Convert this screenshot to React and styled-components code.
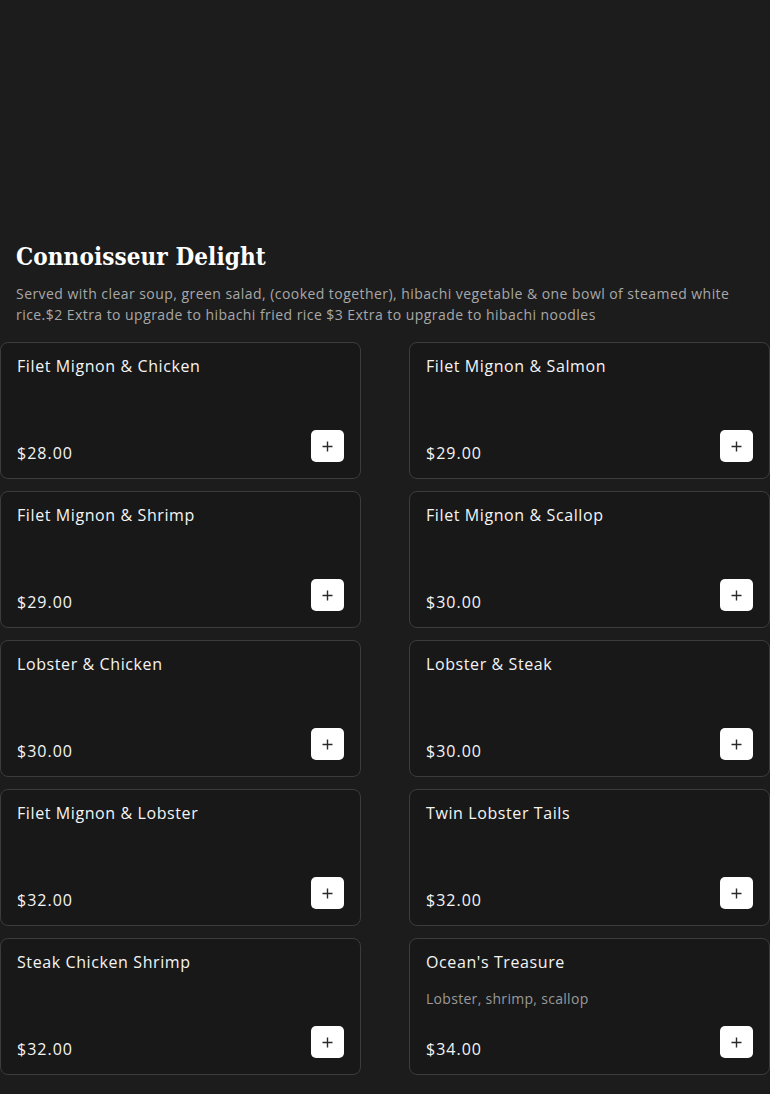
import React from "react";
import styled, { createGlobalStyle } from "styled-components";

const GlobalStyle = createGlobalStyle`
  html, body {
    margin: 0;
    padding: 0;
    background: #1c1c1c;
  }
  * {
    box-sizing: border-box;
  }
`;

const Page = styled.div`
  width: 770px;
  min-height: 1094px;
  background: #1c1c1c;
  color: #ffffff;
  font-family: "Open Sans", "Liberation Sans", sans-serif;
`;

const Banner = styled.div`
  height: 240px;
`;

const Section = styled.section`
  display: flex;
  flex-direction: column;
`;

const Heading = styled.div`
  padding: 0 16px;
`;

const Title = styled.h2`
  margin: 0;
  font-family: "DejaVu Serif", serif;
  font-stretch: condensed;
  font-weight: 700;
  font-size: 24px;
  line-height: 34px;
  letter-spacing: 0.1px;
`;

const Description = styled.p`
  margin: 9px 0 17px;
  font-size: 14px;
  line-height: 21px;
  letter-spacing: 0.45px;
  color: #a8a8a8;
`;

const Grid = styled.div`
  display: grid;
  grid-template-columns: 361px 361px;
  column-gap: 48px;
  row-gap: 12px;
`;

const Card = styled.div`
  display: flex;
  flex-direction: column;
  height: 137px;
  padding: 12px 16px 16px;
  background: #181818;
  border: 1px solid #3c3c3c;
  border-radius: 8px;
`;

const Name = styled.div`
  font-size: 16px;
  line-height: 22px;
  letter-spacing: 0.6px;
  color: #f4f4f4;
`;

const Note = styled.div`
  margin-top: 16px;
  font-size: 14px;
  line-height: 20px;
  letter-spacing: 0.3px;
  color: #9a9a9a;
`;

const Footer = styled.div`
  margin-top: auto;
  display: flex;
  justify-content: space-between;
  align-items: flex-end;
`;

const Price = styled.div`
  font-size: 16px;
  line-height: 18px;
  letter-spacing: 1px;
  color: #f4f4f4;
`;

const AddButton = styled.button`
  display: flex;
  align-items: center;
  justify-content: center;
  width: 33px;
  height: 32px;
  padding: 0;
  border: none;
  border-radius: 5px;
  background: #ffffff;
  cursor: pointer;
`;

const PlusIcon = () => (
  <svg width="11" height="11" viewBox="0 0 11 11">
    <path d="M5.5 0.5v10M0.5 5.5h10" stroke="#2a2a2a" strokeWidth="1.4" />
  </svg>
);

const items = [
  { name: "Filet Mignon & Chicken", price: "$28.00" },
  { name: "Filet Mignon & Salmon", price: "$29.00" },
  { name: "Filet Mignon & Shrimp", price: "$29.00" },
  { name: "Filet Mignon & Scallop", price: "$30.00" },
  { name: "Lobster & Chicken", price: "$30.00" },
  { name: "Lobster & Steak", price: "$30.00" },
  { name: "Filet Mignon & Lobster", price: "$32.00" },
  { name: "Twin Lobster Tails", price: "$32.00" },
  { name: "Steak Chicken Shrimp", price: "$32.00" },
  { name: "Ocean's Treasure", price: "$34.00", note: "Lobster, shrimp, scallop" },
];

export default function App() {
  return (
    <Page>
      <GlobalStyle />
      <Banner />
      <Section>
        <Heading>
          <Title>Connoisseur Delight</Title>
          <Description>
            Served with clear soup, green salad, (cooked together), hibachi
            vegetable &amp; one bowl of steamed white rice.$2 Extra to upgrade to
            hibachi fried rice $3 Extra to upgrade to hibachi noodles
          </Description>
        </Heading>
        <Grid>
          {items.map((item) => (
            <Card key={item.name}>
              <Name>{item.name}</Name>
              {item.note && <Note>{item.note}</Note>}
              <Footer>
                <Price>{item.price}</Price>
                <AddButton aria-label={`Add ${item.name}`}>
                  <PlusIcon />
                </AddButton>
              </Footer>
            </Card>
          ))}
        </Grid>
      </Section>
    </Page>
  );
}
